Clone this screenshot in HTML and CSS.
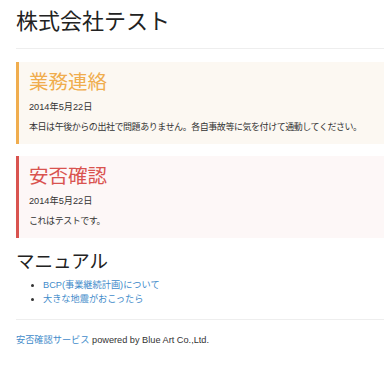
FILE: index.html
```html
<!DOCTYPE html>
<html lang="ja">
<head>
<meta charset="utf-8">
<title>株式会社テスト</title>
<link rel="stylesheet" href="styles.css">
</head>
<body>
<div class="container">
  <h1 class="title">株式会社テスト</h1>
  <hr class="rule rule-top">

  <div class="callout callout-warning">
    <h2 class="callout-title">業務連絡</h2>
    <p class="callout-date">2014年5月22日</p>
    <p class="callout-text">本日は午後からの出社で問題ありません。各自事故等に気を付けて通動してください。</p>
  </div>

  <div class="callout callout-danger">
    <h2 class="callout-title">安否確認</h2>
    <p class="callout-date">2014年5月22日</p>
    <p class="callout-text">これはテストです。</p>
  </div>

  <h2 class="section-title">マニュアル</h2>
  <ul class="manual-list">
    <li><a href="#">BCP(事業継続計画)について</a></li>
    <li><a href="#">大きな地震がおこったら</a></li>
  </ul>

  <hr class="rule rule-bottom">
  <footer class="footer"><a href="#">安否確認サービス</a> powered by Blue Art Co.,Ltd.</footer>
</div>
</body>
</html>
```

FILE: styles.css
```css
html, body {
  margin: 0;
  padding: 0;
  background: #fff;
}
body {
  font-family: "Liberation Sans", "Noto Sans CJK JP", sans-serif;
  color: #333;
  font-size: 9.2px;
  line-height: 13px;
  overflow: hidden;
}
.container {
  padding: 0 0 0 16px;
}
.title {
  margin: 9px 0 0;
  font-size: 22px;
  line-height: 26px;
  font-weight: normal;
  color: #222;
}
.rule {
  border: 0;
  border-top: 1px solid #eee;
  height: 0;
  margin: 0;
}
.rule-top {
  margin-top: 13px;
}
.callout {
  border-left: 3px solid #eee;
  padding: 9px 0 11px 10px;
}
.callout-warning {
  margin-top: 13px;
  background: #fcf8f2;
  border-left-color: #f0ad4e;
}
.callout-danger {
  margin-top: 12px;
  background: #fdf7f7;
  border-left-color: #d9534f;
}
.callout-title {
  margin: 0 0 8px;
  font-size: 19.5px;
  line-height: 22px;
  font-weight: normal;
}
.callout-warning .callout-title {
  color: #f0ad4e;
}
.callout-danger .callout-title {
  color: #d9534f;
}
.callout-date {
  margin: 0;
  line-height: 12px;
}
.callout-text {
  margin: 8px 0 0;
  font-size: 9px;
  line-height: 12px;
  letter-spacing: -0.45px;
  white-space: nowrap;
}
.section-title {
  margin: 13px 0 0;
  font-size: 18.5px;
  line-height: 22px;
  font-weight: normal;
  color: #222;
}
.manual-list {
  margin: 6px 0 0;
  padding-left: 27px;
}
.manual-list li {
  line-height: 13.5px;
}
a {
  color: #428bca;
  text-decoration: none;
}
.rule-bottom {
  margin-top: 13px;
}
.footer {
  margin-top: 14px;
  line-height: 13px;
}
```
